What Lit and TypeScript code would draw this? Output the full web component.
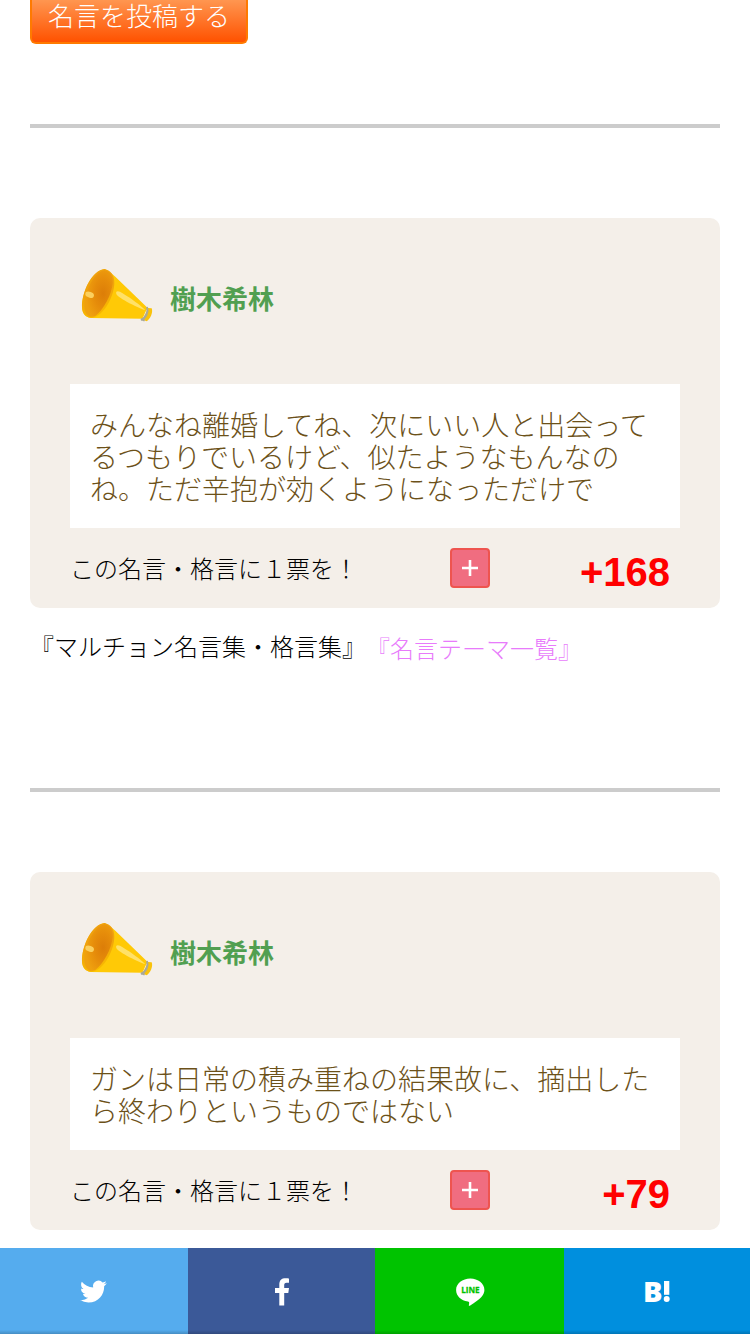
import { LitElement, html, css, svg } from "lit";
import { customElement, property } from "lit/decorators.js";

const horn = html`<svg class="horn" width="75" height="55" viewBox="60 51 225 165">
  <defs>
    <linearGradient id="rim" x1="0" y1="0" x2="0.3" y2="1">
      <stop offset="0" stop-color="#efa00f" />
      <stop offset="0.55" stop-color="#f0a30c" />
      <stop offset="1" stop-color="#f8b900" />
    </linearGradient>
    <radialGradient id="hole" cx="0.66" cy="0.5" r="0.62">
      <stop offset="0" stop-color="#dc7d08" />
      <stop offset="0.5" stop-color="#e68c0a" />
      <stop offset="1" stop-color="#efa00f" />
    </radialGradient>
  </defs>
  <path fill="#ffc906" d="M134 57C142 60 155 70 166 80L263 174C256 184 254 193 247 206L92 204C76 202 67 191 66 172C66 132 90 66 134 57Z" />
  <path fill="url(#rim)" d="M134 57C150 61 164 73 163 100C162 140 132 197 97 204C78 204 67 192 66 172C65 125 96 60 134 57Z" />
  <path fill="url(#hole)" d="M133 61C150 64 160 78 158 100C155 135 130 180 106 198C88 205 75 195 73 170C73 128 101 66 133 61Z" />
  <path fill="#fbd05f" d="M76 132C76 124 84 123 92 126C102 129 104 136 100 142C97 146 88 143 82 140C77 138 76 136 76 132Z" />
  <path fill="#ffe168" d="M169 125C176 119 190 131 207 142C224 154 246 170 256 181C240 176 211 162 193 151C178 141 165 134 169 125Z" />
  <path fill="#f9c20b" d="M263 174L275 175C280 187 271 207 260 214L246 208C254 199 259 188 263 174Z" />
  <path fill="none" stroke="#a9a89a" stroke-width="6" d="M261 171C266 185 258 204 243 210M243 207L254 212" />
</svg>`;

@customElement("quote-card")
export class QuoteCard extends LitElement {
  @property() name = "";
  @property({ attribute: false }) lines: string[] = [];
  @property({ type: Number }) votes = 0;

  static styles = css`
    :host { display: block; background: #f4efe9; border-radius: 10px; padding: 0 40px 20px; }
    .head { display: flex; align-items: center; height: 166px; padding: 0 0 0 10px; box-sizing: border-box; }
    .horn { display: block; margin-top: -13px; }
    .name { color: #519f51; font-size: 26px; line-height: 32px; font-weight: 700; margin: -6px 0 0 15px; }
    .quote { background: #fff; color: #6c5119; font-size: 28px; line-height: 32px; padding: 24px 20px; margin: 0; white-space: nowrap; }
    .vote { display: flex; align-items: center; padding-top: 20px; height: 40px; }
    .label { width: 380px; color: #000; font-size: 24px; line-height: 40px; }
    .plus { display: flex; align-items: center; justify-content: center; width: 40px; height: 40px; box-sizing: border-box; padding: 0; border: 2px solid #ee544f; border-radius: 4px; background: #f06d80; }
    .count { flex: 1; text-align: right; padding: 8px 10px 0 0; color: #f00; font: 700 40px/40px "Liberation Sans", Arial, sans-serif; }
  `;

  render() {
    return html`
      <div class="head">${horn}<h2 class="name">${this.name}</h2></div>
      <p class="quote">${this.lines.map((l, i) => html`${i ? html`<br />` : ""}${l}`)}</p>
      <div class="vote">
        <span class="label">この名言・格言に１票を！</span>
        <button class="plus" aria-label="投票">
          <svg width="16" height="16" viewBox="0 0 16 16"><path d="M8 0v16M0 8h16" stroke="#fff" stroke-width="2.6" /></svg>
        </button>
        <span class="count">+${this.votes}</span>
      </div>`;
  }
}

const shares = [
  { id: "twitter", icon: svg`<path fill="#fff" transform="translate(80 1278.2) scale(1.12)" d="M23.95 4.57a10 10 0 0 1-2.82.77 4.96 4.96 0 0 0 2.16-2.72c-.95.55-2 .95-3.13 1.18a4.92 4.92 0 0 0-8.38 4.48C7.69 8.09 4.07 6.13 1.64 3.16a4.82 4.82 0 0 0-.67 2.48c0 1.71.87 3.21 2.19 4.1a4.9 4.9 0 0 1-2.23-.62v.06a4.92 4.92 0 0 0 3.95 4.83 5 5 0 0 1-2.21.08 4.94 4.94 0 0 0 4.6 3.42A9.87 9.87 0 0 1 0 19.54a13.99 13.99 0 0 0 7.56 2.21c9.05 0 14-7.5 14-13.98 0-.21 0-.42-.02-.63a9.94 9.94 0 0 0 2.46-2.55z" />`, view: "79 1276 30 32" },
  { id: "facebook", icon: svg`<path fill="#fff" d="M278.3 1305.5V1293h-4.3v-4.9h4.3v-3.7c0-4.3 2.4-6.2 6.3-6.2 1.6 0 2.8.1 3.4.2v4.4h-2.4c-2 0-2.4 1-2.4 2.4v2.9h4.8l-.7 4.9h-4.1v12.5z" />`, view: "266 1276 30 32" },
  { id: "line", icon: svg`<path fill="#fff" d="M468.3 1278.5c7.8 0 14.1 5.1 14.1 11.4 0 2.5-1 4.8-3 7-2.9 3.3-9.3 7.4-11.8 8.9-.9.4-.8-.2-.7-.8l.3-2c0-.8-.2-1.3-1.3-1.5-6.8-.9-11.8-5.7-11.8-11.6 0-6.3 6.4-11.4 14.2-11.4z" /><text class="line" x="468.4" y="1293" text-anchor="middle" textLength="18.5" lengthAdjust="spacingAndGlyphs">LINE</text>`, view: "453 1276 30 32" },
  { id: "hatena", icon: svg`<text class="hatena" x="642" y="1302">B</text><path fill="#fff" d="M663 1281h5.3v13.8H663z" /><circle fill="#fff" cx="665.7" cy="1299" r="3" />`, view: "641 1276 30 32" },
];

@customElement("share-bar")
export class ShareBar extends LitElement {
  static styles = css`
    :host { display: grid; grid-template-columns: 188px 187px 189px 186px; height: 86px; position: relative; }
    .item { display: flex; align-items: center; justify-content: center; padding-top: 2px; }
    .item svg { display: block; overflow: visible; }
    .twitter { background: #55acee; }
    .facebook { background: #3b5998; }
    .line-bg { background: #00c300; }
    .hatena-bg { background: #008fde; }
    .line { font: 700 9px "Open Sans", sans-serif; fill: #00c300; stroke: #00c300; stroke-width: 0.3px; }
    .hatena { font: 800 29px "Open Sans", sans-serif; fill: #fff; }
    .shade { position: absolute; left: 0; right: 0; bottom: 0; height: 4px; background: linear-gradient(rgba(0, 0, 0, 0), rgba(0, 0, 0, 0.18)); }
  `;

  render() {
    return html`${shares.map((s) => html`<a class="item ${s.id === "line" || s.id === "hatena" ? s.id + "-bg" : s.id}"><svg width="30" height="32" viewBox=${s.view}>${s.icon}</svg></a>`)}
      <div class="shade"></div>`;
  }
}

@customElement("app-root")
export class AppRoot extends LitElement {
  static styles = css`
    :host { display: flex; flex-direction: column; height: 1334px; overflow: hidden; background: #fff; font-family: "Noto Sans CJK JP", sans-serif; font-weight: 300; }
    main { flex: 1; display: flex; flex-direction: column; padding: 0 30px; }
    .post { align-self: flex-start; width: 218px; height: 44px; box-sizing: border-box; padding: 0 0 12px; border: 2px solid #ff7a00; border-top: 0; border-radius: 0 0 6px 6px; background: linear-gradient(#ff9650, #ff5200); color: #fff; font: inherit; font-size: 26px; line-height: 30px; white-space: nowrap; }
    hr { width: 100%; height: 4px; border: 0; background: #ccc; margin: 80px 0; }
    .first { margin-bottom: 90px; }
    .links { display: flex; height: 100px; font-size: 24px; line-height: 36px; padding-top: 20px; height: 80px; color: #000; }
    .themes { color: #e87bfb; padding-top: 2px; }
  `;

  render() {
    return html`
      <main>
        <button class="post">名言を投稿する</button>
        <hr class="first" />
        <quote-card name="樹木希林" .lines=${["みんなね離婚してね、次にいい人と出会って", "るつもりでいるけど、似たようなもんなの", "ね。ただ辛抱が効くようになっただけで"]} .votes=${168}></quote-card>
        <nav class="links"><span>『マルチョン名言集・格言集』</span><a class="themes">『名言テーマ一覧』</a></nav>
        <hr />
        <quote-card name="樹木希林" .lines=${["ガンは日常の積み重ねの結果故に、摘出した", "ら終わりというものではない"]} .votes=${79}></quote-card>
      </main>
      <share-bar></share-bar>`;
  }
}
